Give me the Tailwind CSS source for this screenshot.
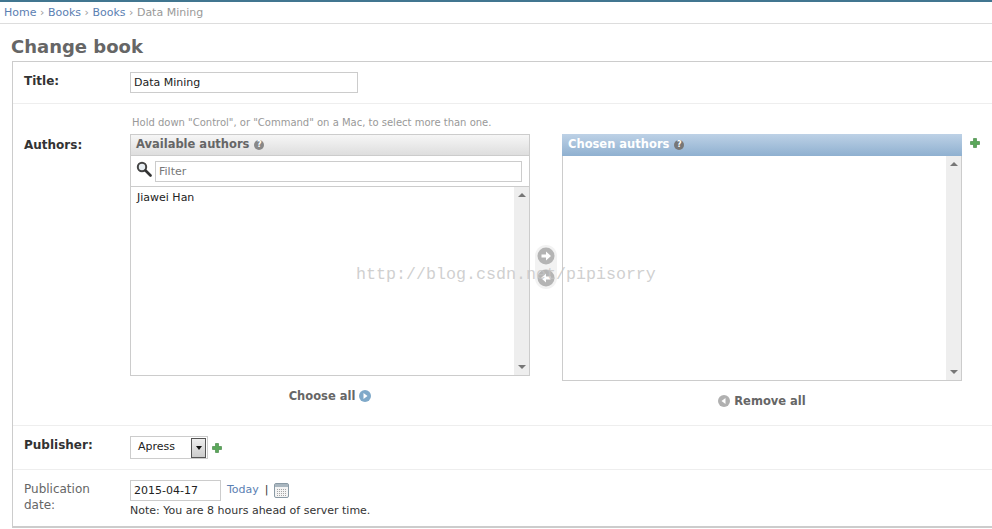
<!DOCTYPE html>
<html lang="en">
<head>
  <meta charset="UTF-8" />
  <title>Change book</title>
  <script src="https://cdn.jsdelivr.net/npm/@tailwindcss/browser@4"></script>
</head>
<body class="relative h-[529px] overflow-hidden bg-white font-['DejaVu_Sans',sans-serif] text-[11px] text-[#333]">

  <!-- breadcrumbs -->
  <div class="h-[2px] bg-[#417690]"></div>
  <div class="h-[22px] pl-1 pt-[3px] border-b border-[#ddd] text-[11px] leading-4 text-[#999]">
    <a class="text-[#5b80b2]">Home</a> › <a class="text-[#5b80b2]">Books</a> › <a class="text-[#5b80b2]">Books</a> › Data Mining
  </div>

  <h1 class="pl-[11px] pt-[11px] h-[37px] text-[18px] leading-[24px] font-bold text-[#666]">Change book</h1>

  <!-- form -->
  <div class="ml-3 h-[467px] border border-r-0 border-[#ccc] border-b-2">

    <!-- title -->
    <div class="flex h-[42px] border-b border-[#eee]">
      <label class="w-[117px] pl-[11px] pt-[11px] text-[12px] leading-4 font-bold">Title:</label>
      <input value="Data Mining" class="mt-[10px] w-[228px] h-[21px] border border-[#ccc] px-[3px] text-[11px] text-[#222]" />
    </div>

    <!-- authors -->
    <div class="flex h-[322px] border-b border-[#eee]">
      <label class="w-[117px] pl-[11px] pt-[33px] text-[12px] leading-4 font-bold">Authors:</label>
      <div>
        <p class="pl-[2px] pt-[12px] h-[30px] text-[10px] leading-[14px] text-[#999]">Hold down "Control", or "Command" on a Mac, to select more than one.</p>
        <div class="flex">

          <!-- available -->
          <div class="w-[400px]">
            <div class="flex items-center gap-[5px] h-[22px] px-[5px] border border-[#ccc] bg-gradient-to-b from-[#f6f6f6] to-[#dedede] text-[11.5px] font-bold text-[#666]">
              Available authors
              <span class="flex items-center justify-center w-[10px] h-[10px] rounded-full bg-[#888] text-[8px] text-white">?</span>
            </div>
            <div class="flex items-center gap-[3px] h-[31px] pl-[5px] pr-[7px] border-x border-b border-[#ccc]">
              <svg class="w-[16px] h-[17px] shrink-0 -mt-[3px]" viewBox="0 0 16 17">
                <circle cx="6" cy="6" r="4.2" fill="#e8eef2" stroke="#444" stroke-width="2"/>
                <path d="M9.5 9.5 L14.5 14.5" stroke="#333" stroke-width="2.6" stroke-linecap="round"/>
              </svg>
              <input placeholder="Filter" class="flex-1 min-w-0 h-[21px] border border-[#ccc] px-[3px] text-[11px] placeholder:text-[#777]" />
            </div>
            <div class="flex h-[189px] border-x border-b border-[#ccc]">
              <div class="flex-1 px-[6px] pt-[3px] text-[11px] leading-4 text-[#222]">Jiawei Han</div>
              <div class="flex flex-col items-center justify-between w-[15px] py-[6px] bg-[#eee]">
                <span class="border-x-[4px] border-x-transparent border-b-[4px] border-b-[#777]"></span>
                <span class="border-x-[4px] border-x-transparent border-t-[4px] border-t-[#777]"></span>
              </div>
            </div>
            <div class="flex items-center justify-center gap-[4px] pt-[12px] text-[11.5px] leading-4 font-bold text-[#666]">
              Choose all
              <svg class="w-[12px] h-[12px]" viewBox="0 0 12 12">
                <circle cx="6" cy="6" r="6" fill="#7fa9c9"/>
                <path d="M4.5 3 L8.5 6 L4.5 9 Z" fill="#fff"/>
              </svg>
            </div>
          </div>

          <!-- move buttons -->
          <div class="w-[32px] pl-[5px] pt-[111px]">
            <div class="flex flex-col items-center gap-[4px] w-[22px] h-[44px] pt-[2px] rounded-[11px] bg-[#f2f2f2]">
              <svg class="w-[18px] h-[18px]" viewBox="0 0 18 18">
                <circle cx="9" cy="9" r="8.5" fill="#b4b4b4"/>
                <path d="M4.5 7.5 H9 V4.5 L14 9 L9 13.5 V10.5 H4.5 Z" fill="#fff"/>
              </svg>
              <svg class="w-[18px] h-[18px]" viewBox="0 0 18 18">
                <circle cx="9" cy="9" r="8.5" fill="#b4b4b4"/>
                <path d="M13.5 7.5 H9 V4.5 L4 9 L9 13.5 V10.5 H13.5 Z" fill="#fff"/>
              </svg>
            </div>
          </div>

          <!-- chosen -->
          <div class="w-[400px]">
            <div class="flex items-center gap-[5px] h-[22px] px-[6px] bg-gradient-to-b from-[#bdd1e6] to-[#8fb0d0] text-[11.5px] font-bold text-white">
              Chosen authors
              <span class="flex items-center justify-center w-[10px] h-[10px] rounded-full bg-[#777] text-[8px] text-white">?</span>
            </div>
            <div class="flex justify-end h-[225px] border-x border-b border-[#ccc]">
              <div class="flex flex-col items-center justify-between w-[15px] py-[6px] bg-[#eee]">
                <span class="border-x-[4px] border-x-transparent border-b-[4px] border-b-[#777]"></span>
                <span class="border-x-[4px] border-x-transparent border-t-[4px] border-t-[#777]"></span>
              </div>
            </div>
            <div class="flex items-center justify-center gap-[4px] pt-[12px] text-[11.5px] leading-4 font-bold text-[#666]">
              <svg class="w-[12px] h-[12px]" viewBox="0 0 12 12">
                <circle cx="6" cy="6" r="6" fill="#b0b0b0"/>
                <path d="M7.5 3 L3.5 6 L7.5 9 Z" fill="#fff"/>
              </svg>
              Remove all
            </div>
          </div>

          <!-- add author -->
          <svg class="w-[10px] h-[10px] ml-[8px] mt-[4px]" viewBox="0 0 10 10">
            <path d="M3.5 0.5 H6.5 V3.5 H9.5 V6.5 H6.5 V9.5 H3.5 V6.5 H0.5 V3.5 H3.5 Z" fill="#5aa85a" stroke="#3d7f3d" stroke-width="0.6"/>
          </svg>
        </div>
      </div>
    </div>

    <!-- publisher -->
    <div class="flex h-[44px] border-b border-[#eee]">
      <label class="w-[117px] pl-[11px] pt-[11px] text-[12px] leading-4 font-bold">Publisher:</label>
      <div class="flex items-center gap-[4px] mt-[10px] h-[23px]">
        <div class="flex items-center justify-between w-[78px] h-[23px] border border-[#ccc] pl-[7px] pr-[1px] text-[11px] text-[#222]">
          Apress
          <span class="flex items-center justify-center w-[15px] h-[20px] border border-[#555] bg-gradient-to-b from-[#eee] to-[#ccc]">
            <span class="border-x-[3.5px] border-x-transparent border-t-[4px] border-t-[#111]"></span>
          </span>
        </div>
        <svg class="w-[10px] h-[10px]" viewBox="0 0 10 10">
          <path d="M3.5 0.5 H6.5 V3.5 H9.5 V6.5 H6.5 V9.5 H3.5 V6.5 H0.5 V3.5 H3.5 Z" fill="#5aa85a" stroke="#3d7f3d" stroke-width="0.6"/>
        </svg>
      </div>
    </div>

    <!-- publication date -->
    <div class="flex">
      <label class="w-[117px] pl-[11px] pt-[11px] text-[12px] leading-4 text-[#666]">Publication<br />date:</label>
      <div class="pt-[10px]">
        <div class="flex items-center h-[21px]">
          <input value="2015-04-17" class="w-[91px] h-[21px] border border-[#ccc] px-[3px] text-[11px] text-[#222]" />
          <a class="ml-[6px] text-[#5b80b2]">Today</a>
          <span class="ml-[6px]">|</span>
          <svg class="w-[15px] h-[15px] ml-[5px]" viewBox="0 0 15 15">
            <rect x="0.5" y="0.5" width="14" height="14" rx="1.5" fill="#f4f4f4" stroke="#8a9aa5"/>
            <rect x="1" y="1" width="13" height="3" fill="#a9b6bf"/>
            <path d="M3 6.5 H12 M3 8.5 H12 M3 10.5 H12 M3 12.5 H12" stroke="#a5a5a5" stroke-dasharray="1 1"/>
          </svg>
        </div>
        <p class="pt-[2px] leading-4">Note: You are 8 hours ahead of server time.</p>
      </div>
    </div>
  </div>

  <!-- watermark -->
  <div class="absolute left-[356px] top-[265px] font-['Liberation_Mono',monospace] text-[16.67px] leading-5 text-[#c4c4c4]/80">http://blog.csdn.net/pipisorry</div>
</body>
</html>
